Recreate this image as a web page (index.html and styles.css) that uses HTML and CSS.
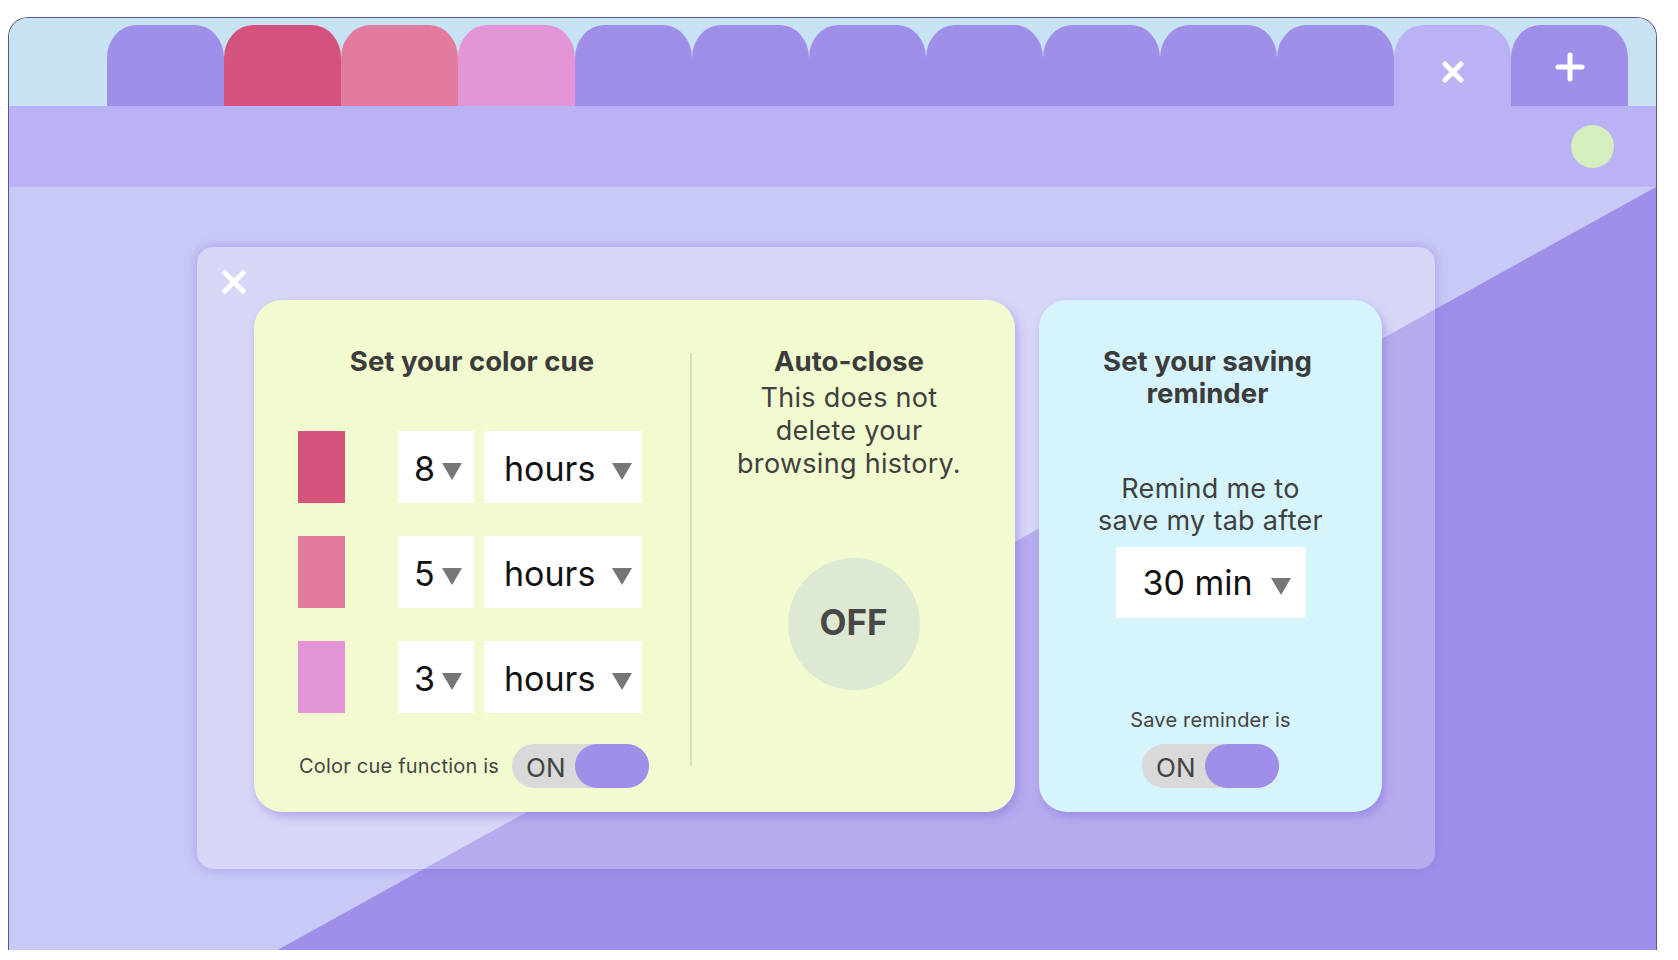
FILE: index.html
```html
<!DOCTYPE html>
<html lang="en">
<head>
  <meta charset="UTF-8" />
  <title>Tab Timer - Settings</title>
  <link rel="stylesheet" href="styles.css">
</head>
<body>

  <div class="window">
    <div class="tabstrip">
      <div class="tab"></div>
      <div class="tab tab-red"></div>
      <div class="tab tab-pink"></div>
      <div class="tab tab-lilac"></div>
      <div class="tab"></div>
      <div class="tab"></div>
      <div class="tab"></div>
      <div class="tab"></div>
      <div class="tab"></div>
      <div class="tab"></div>
      <div class="tab"></div>
      <div class="tab tab-active">
        <svg class="tab-icon-close" width="22" height="22" viewBox="0 0 22 22">
          <path d="M3 3 L19 19 M19 3 L3 19" stroke="#fff" stroke-width="5" stroke-linecap="round" />
        </svg>
      </div>
      <div class="tab tab-new">
        <svg width="30" height="30" viewBox="0 0 30 30">
          <path d="M15 3 V27 M3 15 H27" stroke="#fff" stroke-width="5" stroke-linecap="round" />
        </svg>
      </div>
    </div>

    <div class="toolbar">
      <span class="profile-dot"></span>
    </div>

    <div class="content">
      <div class="panel">
        <button class="panel-close" aria-label="Close">
          <svg width="24" height="24" viewBox="0 0 24 24">
            <path d="M3 3 L21 21 M21 3 L3 21" stroke="#fff" stroke-width="5" stroke-linecap="square" />
          </svg>
        </button>

        <div class="card card-green">
          <div class="cue-col">
            <h2 class="card-title">Set your color cue</h2>

            <div class="cue-rows">
              <div class="cue-row">
                <span class="swatch swatch-red"></span>
                <div class="select select-num">8<span class="caret"></span></div>
                <div class="select select-unit">hours<span class="caret"></span></div>
              </div>
              <div class="cue-row">
                <span class="swatch swatch-pink"></span>
                <div class="select select-num">5<span class="caret"></span></div>
                <div class="select select-unit">hours<span class="caret"></span></div>
              </div>
              <div class="cue-row">
                <span class="swatch swatch-lilac"></span>
                <div class="select select-num">3<span class="caret"></span></div>
                <div class="select select-unit">hours<span class="caret"></span></div>
              </div>
            </div>

            <div class="cue-footer">
              <span class="small-label">Color cue function is</span>
              <div class="toggle"><span class="toggle-text">ON</span><span class="toggle-knob"></span></div>
            </div>
          </div>

          <div class="divider"></div>

          <div class="auto-col">
            <h2 class="card-title">Auto-close</h2>
            <p class="card-text">This does not<br>delete your<br>browsing history.</p>
            <div class="off-button">OFF</div>
          </div>
        </div>

        <div class="card card-blue">
          <h2 class="card-title">Set your saving<br>reminder</h2>
          <p class="card-text reminder-text">Remind me to<br>save my tab after</p>
          <div class="select select-time">30 min<span class="caret"></span></div>
          <span class="small-label reminder-label">Save reminder is</span>
          <div class="toggle"><span class="toggle-text">ON</span><span class="toggle-knob"></span></div>
        </div>
      </div>
    </div>
  </div>

</body>
</html>
```

FILE: styles.css
```css
* {
    box-sizing: border-box;
}

body {
    margin: 0;
    background-color: #ffffff;
    font-family: 'Inter', 'Liberation Sans', sans-serif;
}

/* browser window */
.window {
    width: 1649px;
    height: 933px;
    margin: 17px 0 0 8px;
    border: 1px solid #555b8f;
    border-bottom: none;
    border-radius: 20px 20px 0 0;
    overflow: hidden;
    display: flex;
    flex-direction: column;
}

.tabstrip {
    height: 88px;
    flex-shrink: 0;
    background-color: #c7e2f3;
    display: flex;
    align-items: flex-end;
    padding-left: 98px;
}

.tab {
    width: 117px;
    height: 81px;
    background-color: #9f8fe8;
    border-radius: 29px 29px 0 0 / 33px 33px 0 0;
    display: flex;
    justify-content: center;
    align-items: flex-start;
}

.tab-red { background-color: #d3537c; }
.tab-pink { background-color: #e27b9d; }
.tab-lilac { background-color: #e394d6; }

.tab-active {
    background-color: #bbb1f5;
    padding-top: 36px;
}

.tab-new {
    padding-top: 27px;
}

.toolbar {
    height: 81px;
    flex-shrink: 0;
    background-color: #bbb1f5;
    display: flex;
    justify-content: flex-end;
    align-items: center;
    padding-right: 42px;
}

.profile-dot {
    width: 43px;
    height: 43px;
    border-radius: 50%;
    background-color: #d5eebd;
}

.content {
    flex: 1;
    position: relative;
    background-color: #c9c9f5;
    padding: 60px 0 0 188px;
}

/* diagonal backdrop */
.content::before {
    content: '';
    position: absolute;
    inset: 0;
    background-color: #9f8fe8;
    clip-path: polygon(16.3% 100%, 100% 0, 100% 100%);
}

/* settings panel */
.panel {
    position: relative;
    width: 1238px;
    height: 622px;
    padding: 53px 53px 57px 57px;
    background-color: rgba(255, 255, 255, 0.25);
    border-radius: 16px;
    box-shadow: 0 0 12px rgba(140, 122, 236, 0.6);
    display: flex;
    gap: 24px;
}

.panel-close {
    position: absolute;
    left: 25px;
    top: 23px;
    padding: 0;
    border: none;
    background: none;
    cursor: pointer;
    display: flex;
}

.card {
    height: 512px;
    border-radius: 28px;
    box-shadow: 3px 5px 10px rgba(110, 90, 210, 0.35);
    color: #404040;
}

.card-green {
    width: 761px;
    background-color: #f2fbcf;
    display: flex;
}

.card-blue {
    width: 343px;
    background-color: #d5f4fc;
    display: flex;
    flex-direction: column;
    align-items: center;
    padding-top: 45px;
    text-align: center;
}

.card-title {
    margin: 0;
    font-size: 27.6px;
    font-weight: 700;
    line-height: 32px;
    color: #3c3c3c;
    text-align: center;
}

.card-text {
    margin: 0;
    font-size: 27px;
    line-height: 33px;
    letter-spacing: 0.3px;
}

.small-label {
    font-size: 20px;
    color: #444;
    letter-spacing: 0.2px;
}

/* color cue column */
.cue-col {
    width: 436px;
    padding-top: 45px;
}

.cue-rows {
    display: flex;
    flex-direction: column;
    gap: 33px;
    margin: 54px 0 0 44px;
}

.cue-row {
    display: flex;
    align-items: center;
}

.swatch {
    width: 47px;
    height: 72px;
}

.swatch-red { background-color: #d3537c; }
.swatch-pink { background-color: #e27b9d; }
.swatch-lilac { background-color: #e394d6; }

.select {
    height: 72px;
    background-color: #ffffff;
    display: flex;
    align-items: center;
    padding-top: 3px;
    font-size: 34px;
    color: #111;
}

.caret {
    width: 0;
    height: 0;
    border-left: 10px solid transparent;
    border-right: 10px solid transparent;
    border-top: 17px solid #767676;
    margin-top: 5px;
    margin-left: auto;
}

.select-num {
    width: 76px;
    margin-left: 53px;
    padding-left: 16px;
    padding-right: 12px;
}

.select-unit {
    width: 158px;
    margin-left: 10px;
    padding-left: 20px;
    padding-right: 10px;
}

.select-time {
    width: 190px;
    height: 71px;
    margin-top: 10px;
    padding-top: 0;
    padding-left: 27px;
    padding-right: 15px;
}

.select-time .caret {
    margin-top: 8px;
}

.cue-footer {
    display: flex;
    align-items: center;
    margin: 31px 0 0 45px;
}

.cue-footer .toggle {
    margin-left: 13px;
}

.toggle {
    width: 137px;
    height: 44px;
    border-radius: 22px;
    background-color: #d9d9d9;
    display: flex;
    align-items: center;
}

.toggle-text {
    font-size: 26px;
    color: #444;
    padding-left: 14px;
    padding-top: 2px;
}

.toggle-knob {
    width: 74px;
    height: 44px;
    border-radius: 22px;
    background-color: #9f8fe8;
    margin-left: auto;
}

.divider {
    width: 2px;
    background-color: #cde8b2;
    margin: 53px 0 46px;
}

/* auto-close column */
.auto-col {
    flex: 1;
    padding-top: 45px;
    display: flex;
    flex-direction: column;
    align-items: center;
    text-align: center;
}

.auto-col .card-title,
.auto-col .card-text {
    margin-right: 9px;
}

.auto-col .card-text {
    margin-top: 4px;
}

.off-button {
    width: 132px;
    height: 132px;
    border-radius: 50%;
    background-color: #dde9d3;
    margin-top: 78px;
    padding-bottom: 4px;
    display: flex;
    justify-content: center;
    align-items: center;
    font-size: 35px;
    font-weight: 700;
    color: #484848;
}

/* reminder card */
.card-blue .card-title {
    margin-right: 6px;
}

.reminder-text {
    margin-top: 64px;
    line-height: 32px;
}

.reminder-label {
    margin-top: 90px;
    line-height: 24px;
}

.card-blue .toggle {
    margin-top: 12px;
}
```
